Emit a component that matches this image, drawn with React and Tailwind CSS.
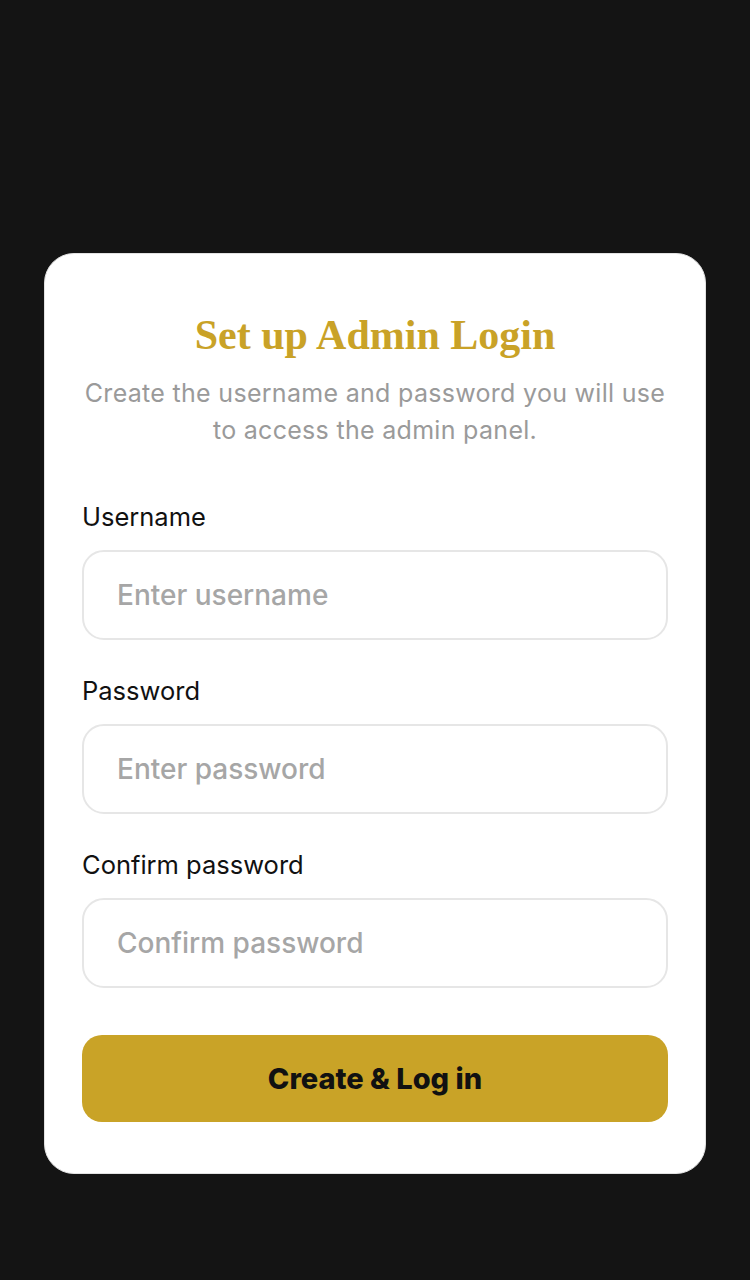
const fields = [
  { label: 'Username', placeholder: 'Enter username', type: 'text' },
  { label: 'Password', placeholder: 'Enter password', type: 'password' },
  { label: 'Confirm password', placeholder: 'Confirm password', type: 'password' },
]

export default function App() {
  return (
    <main className="min-h-screen bg-[#141414] px-[44px] pt-[253px] pb-24 font-['Inter',sans-serif]">
      <div className="bg-white rounded-[30px] border border-[#e2e2e2] px-[37px] pt-[57px] pb-[51px]">
        <h1 className="text-center text-[42px] leading-[48px] font-bold text-[#c9a227] font-['Liberation_Serif',serif]">
          Set up Admin Login
        </h1>
        <p className="mt-[16px] text-center text-[25px] leading-[37px] text-[#9a9a9a] tracking-[0.3px]">
          Create the username and password you will use to access the admin panel.
        </p>

        <form className="mt-[52px] flex flex-col gap-[35px]">
          {fields.map((f) => (
            <div key={f.label}>
              <label className="block text-[25.5px] leading-[32px] text-[#111111] mb-[17px]">
                {f.label}
              </label>
              <input
                type={f.type}
                placeholder={f.placeholder}
                className="w-full h-[90px] rounded-[22px] border-2 border-[#e6e6e6] px-[33px] text-[28px] font-medium text-[#111] placeholder:text-[#a6a6a6] outline-none"
              />
            </div>
          ))}
        </form>

        <button
          type="button"
          className="mt-[47px] w-full h-[87px] rounded-[20px] bg-[#c9a327] text-[29px] font-extrabold text-[#111111]"
        >
          Create &amp; Log in
        </button>
      </div>
    </main>
  )
}
